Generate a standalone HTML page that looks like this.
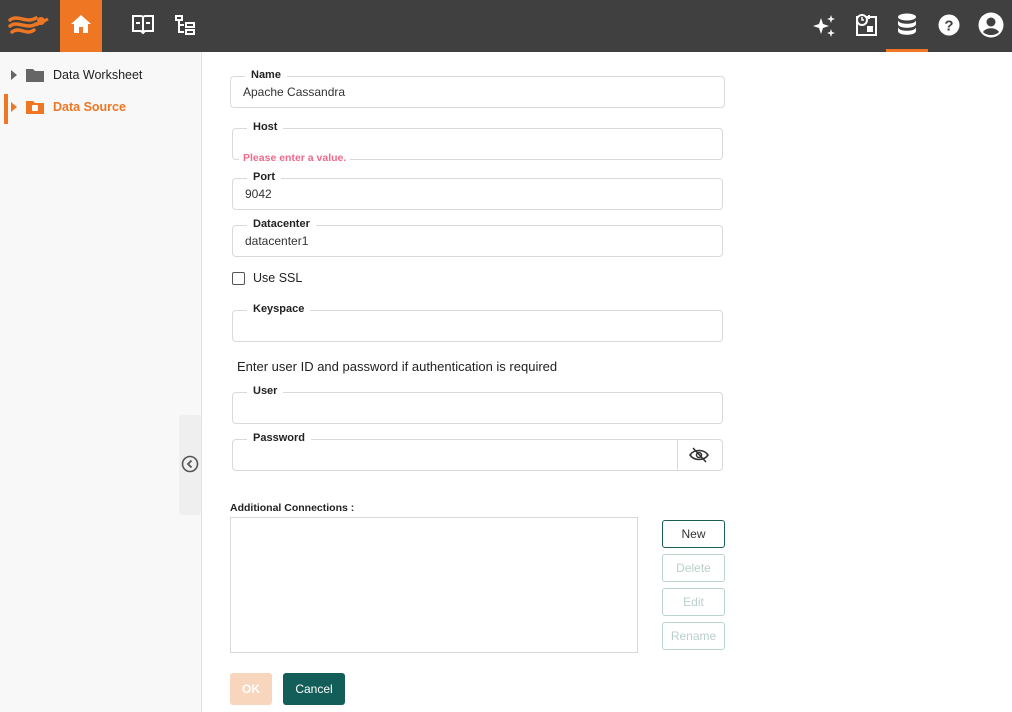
<!DOCTYPE html>
<html><head><meta charset="utf-8"><style>
*{box-sizing:border-box;margin:0;padding:0}
body{width:1012px;height:712px;overflow:hidden;background:#fff;font-family:"Liberation Sans",Arial,sans-serif;position:relative;color:#222}
.top{position:absolute;left:0;top:0;width:1012px;height:52px;background:#404040}
.side{position:absolute;left:0;top:52px;width:202px;height:660px;background:#f8f8f8;border-right:1px solid #e2e2e2}
.f{position:absolute;border:1px solid #d9d9d9;border-radius:4px;height:32px}
.f .l{position:absolute;top:-9px;left:14px;background:#fff;padding:0 6px;font-size:11px;font-weight:bold;color:#222;line-height:14px}
.f .v{position:absolute;left:12px;top:8px;font-size:12px;color:#333}
.b{position:absolute;left:662px;width:63px;height:28px;border:1px solid #b9d4cf;border-radius:3px;font-size:12px;color:#b9cfcb;text-align:center;line-height:26px}
.abs{position:absolute}
</style></head><body>
<div class="top">
 <svg class="abs" style="left:8px;top:12px" width="46" height="26" viewBox="0 0 46 26"><path d="M2 8c8-6 16 4 26-2M2 14c8-6 16 4 26-2M4 20c8-6 14 4 22-2" stroke="#ef7622" stroke-width="3.5" fill="none" stroke-linecap="round"/><circle cx="33" cy="9" r="4" fill="#ef7622"/><path d="M28 13l12-6" stroke="#ef7622" stroke-width="3"/><circle cx="50" cy="5" r="1.5" fill="#ef7622"/></svg>
 <div class="abs" style="left:60px;top:0;width:42px;height:52px;background:#ef7622"></div>
 <svg class="abs" style="left:70px;top:14px" width="22" height="20" viewBox="0 0 22 20"><path d="M11 1L1 10h3v9h5v-6h4v6h5v-9h3z" fill="#fff"/></svg>
 <svg class="abs" style="left:131px;top:13px" width="24" height="22" viewBox="0 0 24 22"><path d="M2 3h8c1 0 2 1 2 2 0-1 1-2 2-2h8v15h-8l-2 2-2-2H2z" stroke="#fff" stroke-width="2" fill="none"/><path d="M12 5v15M5 10h4M15 10h4" stroke="#fff" stroke-width="2"/></svg>
 <svg class="abs" style="left:175px;top:15px" width="20" height="20" viewBox="0 0 20 20"><path d="M1 1h6v4H1zM4 5v12h5M4 10h5M11 8h8v4h-8zM11 15h8v4h-8z" stroke="#fff" stroke-width="2" fill="none"/></svg>
 <svg class="abs" style="left:812px;top:14px" width="24" height="24" viewBox="0 0 24 24"><path d="M9 4l2 6 6 2-6 2-2 6-2-6-6-2 6-2z M19 1l1 3 3 1-3 1-1 3-1-3-3-1 3-1z M19 15l1 3 3 1-3 1-1 3-1-3-3-1 3-1z" fill="#fff"/></svg>
 <svg class="abs" style="left:854px;top:13px" width="24" height="24" viewBox="0 0 24 24"><rect x="3" y="4" width="19" height="18" stroke="#fff" stroke-width="2" fill="none"/><circle cx="8" cy="7" r="5" fill="#404040" stroke="#fff" stroke-width="2"/><path d="M8 4v3h2" stroke="#fff" stroke-width="1.5" fill="none"/><rect x="13" y="13" width="6" height="6" fill="#fff"/><path d="M15 2v4" stroke="#fff" stroke-width="2"/></svg>
 <svg class="abs" style="left:897px;top:13px" width="20" height="22" viewBox="0 0 20 22"><ellipse cx="10" cy="4" rx="9" ry="3.5" fill="#fff"/><path d="M1 7c0 5 18 5 18 0v4c0 5-18 5-18 0zM1 14c0 5 18 5 18 0v4c0 5-18 5-18 0z" fill="#fff"/></svg>
 <div class="abs" style="left:886px;top:49px;width:42px;height:3px;background:#ef7622"></div>
 <svg class="abs" style="left:938px;top:14px" width="22" height="22" viewBox="0 0 22 22"><circle cx="11" cy="11" r="10.5" fill="#fff"/><text x="11" y="16.5" text-anchor="middle" font-family="Liberation Sans" font-weight="bold" font-size="15" fill="#404040">?</text></svg>
 <svg class="abs" style="left:978px;top:12px" width="26" height="26" viewBox="0 0 26 26"><circle cx="13" cy="13" r="12.5" fill="#fff"/><circle cx="13" cy="10" r="4.5" fill="#404040"/><path d="M5 20c3-5 13-5 16 0-4 4-12 4-16 0z" fill="#404040"/></svg>
</div>
<div class="side">
 <div class="abs" style="left:11px;top:18px;width:0;height:0;border-left:6px solid #666;border-top:5px solid transparent;border-bottom:5px solid transparent"></div>
 <svg class="abs" style="left:26px;top:15px" width="18" height="15" viewBox="0 0 18 15"><path d="M0 2h7l2 2h9v11H0z" fill="#666"/></svg>
 <div class="abs" style="left:53px;top:16px;font-size:12.5px;color:#222">Data Worksheet</div>
 <div class="abs" style="left:4px;top:42px;width:4px;height:30px;background:#ef7622"></div>
 <div class="abs" style="left:11px;top:50px;width:0;height:0;border-left:6px solid #ef7622;border-top:5px solid transparent;border-bottom:5px solid transparent"></div>
 <svg class="abs" style="left:26px;top:47px" width="18" height="15" viewBox="0 0 18 15"><path d="M0 2h7l2 2h9v11H0z" fill="#ef7622"/><rect x="6" y="6" width="6" height="6" rx="1" fill="#fff"/></svg>
 <div class="abs" style="left:53px;top:48px;font-size:12.5px;color:#ef7622;font-weight:bold">Data Source</div>
 <div class="abs" style="left:179px;top:363px;width:22px;height:100px;background:#efefef;border-radius:3px"></div>
 <svg class="abs" style="left:181px;top:403px" width="18" height="18" viewBox="0 0 18 18"><circle cx="9" cy="9" r="7.5" stroke="#555" stroke-width="1.6" fill="none"/><path d="M10.5 5.5L7 9l3.5 3.5" stroke="#555" stroke-width="1.8" fill="none"/></svg>
</div>
<div class="f" style="left:230px;top:76px;width:495px"><span class="l">Name</span><span class="v">Apache Cassandra</span></div>
<div class="f" style="left:232px;top:128px;width:491px"><span class="l">Host</span><span class="abs" style="left:6px;top:23px;font-size:10.5px;font-weight:bold;color:#f06a8a;background:#fff;padding:0 4px;line-height:12px">Please enter a value.</span></div>
<div class="f" style="left:232px;top:178px;width:491px"><span class="l">Port</span><span class="v">9042</span></div>
<div class="f" style="left:232px;top:225px;width:491px"><span class="l">Datacenter</span><span class="v">datacenter1</span></div>
<div class="abs" style="left:232px;top:272px;width:13px;height:13px;border:1.5px solid #555;border-radius:2px"></div>
<div class="abs" style="left:253px;top:271px;font-size:12.5px">Use SSL</div>
<div class="f" style="left:232px;top:310px;width:491px"><span class="l">Keyspace</span></div>
<div class="abs" style="left:237px;top:359px;font-size:13px">Enter user ID and password if authentication is required</div>
<div class="f" style="left:232px;top:392px;width:491px"><span class="l">User</span></div>
<div class="f" style="left:232px;top:439px;width:491px"><span class="l">Password</span><div class="abs" style="left:444px;top:0;width:1px;height:30px;background:#d9d9d9"></div>
<svg class="abs" style="left:456px;top:6px" width="20" height="18" viewBox="0 0 20 18"><path d="M1 9c4-6 14-6 18 0-4 6-14 6-18 0z" stroke="#333" stroke-width="1.6" fill="none"/><circle cx="10" cy="9" r="2.5" stroke="#333" stroke-width="1.5" fill="none"/><path d="M4 2l13 14" stroke="#333" stroke-width="1.6"/></svg></div>
<div class="abs" style="left:230px;top:502px;font-size:10.5px;font-weight:bold">Additional Connections :</div>
<div class="abs" style="left:230px;top:517px;width:408px;height:136px;border:1px solid #d9d9d9"></div>
<div class="b" style="top:520px;border-color:#1a5e58;color:#333">New</div>
<div class="b" style="top:554px">Delete</div>
<div class="b" style="top:588px">Edit</div>
<div class="b" style="top:622px">Rename</div>
<div class="abs" style="left:230px;top:673px;width:42px;height:32px;background:#f8d6bd;border-radius:3px;color:#fff;font-size:12px;font-weight:bold;text-align:center;line-height:32px">OK</div>
<div class="abs" style="left:283px;top:673px;width:62px;height:32px;background:#135e58;border-radius:3px;color:#fff;font-size:12px;text-align:center;line-height:32px">Cancel</div>
</body></html>
